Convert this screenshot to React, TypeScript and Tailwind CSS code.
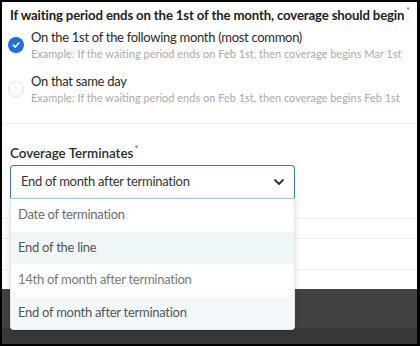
import React from "react"

const options = [
  { label: "Date of termination", bg: "bg-white", text: "text-[#6b6b6b]" },
  { label: "End of the line", bg: "bg-[#eef6fa]", text: "text-[#555]" },
  { label: "14th of month after termination", bg: "bg-white", text: "text-[#7a7a7a]" },
  { label: "End of month after termination", bg: "bg-[#f3f8fd]", text: "text-[#555]" },
]

const Radio = ({ checked }: { checked: boolean }) => {
  if (checked) {
    return (
      <span className="flex h-[16px] w-[16px] items-center justify-center rounded-full bg-[#1f6fe0]">
        <svg width="10" height="10" viewBox="0 0 10 10">
          <path d="M2.2 5.2 L4.2 7 L7.8 3" fill="none" stroke="white" strokeWidth="1.7" strokeLinecap="round" strokeLinejoin="round" />
        </svg>
      </span>
    )
  }
  return <span className="block h-[16px] w-[16px] rounded-full border border-[#e3e3e3] bg-white" />
}

const App = () => {
  return (
    <div
      className="relative flex h-[346px] w-[420px] flex-col overflow-hidden border-t-2 border-b-2 border-l-2 border-r-[3px] border-black bg-white"
      style={{ fontFamily: "Lato, Arial, sans-serif" }}
    >
      <div className="px-[8px] pt-[3px]">
        <div className="h-[20px] whitespace-nowrap text-[13.2px] font-bold leading-[20px] tracking-[-0.15px] text-[#222]">
          If waiting period ends on the 1st of the month, coverage should begin
          <span className="relative top-[-6px] ml-[2px] text-[9px] font-normal leading-[0] text-[#e0314b]">*</span>
        </div>

        <div className="mt-[3px] flex gap-[7px]">
          <div className="-ml-[2px] pt-[9px]">
            <Radio checked />
          </div>
          <div className="whitespace-nowrap">
            <div className="text-[13px] leading-[18px] tracking-[-0.3px] text-[#2a2a2a]">
              On the 1st of the following month (most common)
            </div>
            <div className="text-[11px] leading-[16px] text-[#ababab]">
              Example: If the waiting period ends on Feb 1st, then coverage begins Mar 1st
            </div>
          </div>
        </div>

        <div className="mt-[10px] flex gap-[7px]">
          <div className="-ml-[2px] pt-[9px]">
            <Radio checked={false} />
          </div>
          <div className="whitespace-nowrap">
            <div className="text-[13px] leading-[18px] tracking-[-0.3px] text-[#2a2a2a]">On that same day</div>
            <div className="text-[11px] leading-[16px] text-[#ababab]">
              Example: If the waiting period ends on Feb 1st, then coverage begins Feb 1st
            </div>
          </div>
        </div>
      </div>

      <div className="mt-[17px] border-b border-[#eeeeee]" />

      <div className="px-[8px] pt-[19px]">
        <div className="h-[20px] text-[13.4px] font-semibold leading-[20px] text-[#2a2a2a]">
          Coverage Terminates
          <span className="relative top-[-6px] ml-[1px] text-[9px] leading-[0] text-[#e0314b]">*</span>
        </div>
        <div className="relative mt-[2px] w-[285px]">
          <div className="flex h-[33px] items-center justify-between rounded-t-[4px] border border-b-0 border-[#3d74dc] pb-[1px] pl-[10px] pr-[8px] text-[13px] tracking-[-0.27px] text-[#333]">
            <span>End of month after termination</span>
            <svg width="14" height="14" viewBox="0 0 14 14">
              <path d="M3 5 L7 9 L11 5" fill="none" stroke="#333" strokeWidth="1.8" strokeLinecap="round" strokeLinejoin="round" />
            </svg>
          </div>
          <div className="absolute left-0 top-[33px] z-10 w-full overflow-hidden rounded-b-[4px] border border-[#e6e6e6] border-t-[#a9c0ee] bg-white shadow-[0_2px_6px_rgba(0,0,0,0.15)]">
            {options.map((o) => (
              <div
                key={o.label}
                className={`flex h-[32.5px] items-center px-[7px] pb-[1px] text-[13px] tracking-[-0.27px] ${o.bg} ${o.text}`}
              >
                {o.label}
              </div>
            ))}
          </div>
        </div>
      </div>

      <div className="h-[21px] shrink-0 border-b border-[#eeeeee]" />
      <div className="h-[20px] shrink-0 border-b border-[#eeeeee]" />
      <div className="h-[31px] shrink-0 border-b border-[#eeeeee]" />
      <div className="h-[19px] shrink-0" />
      <div className="h-[39px] shrink-0 bg-[#414141]" />
      <div className="flex-1 bg-[#383838]" />
    </div>
  )
}

export default App
